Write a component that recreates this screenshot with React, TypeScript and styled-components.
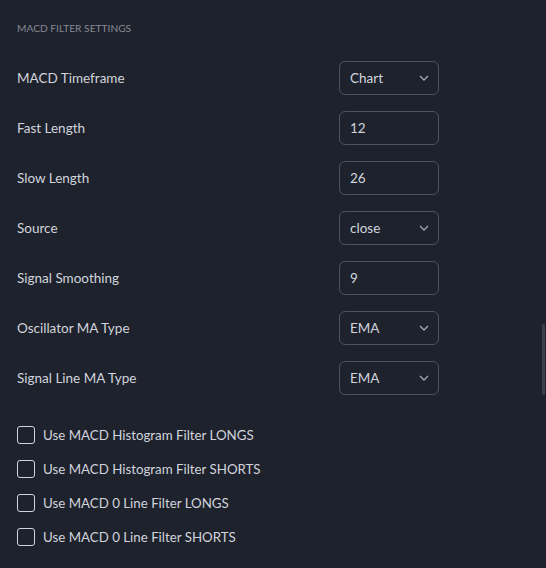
import React from 'react'
import styled, { createGlobalStyle } from 'styled-components'

const GlobalStyle = createGlobalStyle`
  html, body {
    margin: 0;
    padding: 0;
    background: #1e222d;
  }
  body {
    font-family: Lato, "Liberation Sans", sans-serif;
    color: #d1d4dc;
  }
`

const Page = styled.div`
  position: relative;
  width: 546px;
  height: 568px;
  box-sizing: border-box;
  padding: 20px 107px 0 17px;
  background: #1e222d;
  overflow: hidden;
`

const SectionTitle = styled.div`
  font-size: 10.2px;
  line-height: 16px;
  text-transform: uppercase;
  color: #868993;
  margin-bottom: 25px;
`

const FieldList = styled.div`
  display: flex;
  flex-direction: column;
  gap: 16px;
`

const Row = styled.div`
  display: flex;
  align-items: center;
  justify-content: space-between;
  height: 34px;
`

const Label = styled.span`
  font-size: 13.5px;
  color: #d1d4dc;
`

const Control = styled.div`
  box-sizing: border-box;
  width: 100px;
  height: 34px;
  border: 1px solid #50535e;
  border-radius: 6px;
  display: flex;
  align-items: center;
  justify-content: space-between;
  padding: 0 9px 0 10px;
  font-size: 13.5px;
  color: #d1d4dc;
`

const Chevron = styled.svg`
  width: 10px;
  height: 6px;
  flex: none;
`

const CheckList = styled.div`
  display: flex;
  flex-direction: column;
  gap: 16px;
  margin-top: 31px;
`

const CheckRow = styled.label`
  display: flex;
  align-items: center;
  gap: 8px;
  height: 18px;
  font-size: 13.3px;
  color: #d1d4dc;
  white-space: nowrap;
`

const Box = styled.span`
  box-sizing: border-box;
  width: 18px;
  height: 18px;
  border: 1px solid #d1d4dc;
  border-radius: 3px;
  flex: none;
`

const ScrollThumb = styled.div`
  position: absolute;
  right: 1px;
  top: 324px;
  width: 3px;
  height: 71px;
  background: #3b3f4a;
  border-radius: 2px;
`

type Field = { label: string; value: string; select?: boolean }

const fields: Field[] = [
  { label: 'MACD Timeframe', value: 'Chart', select: true },
  { label: 'Fast Length', value: '12' },
  { label: 'Slow Length', value: '26' },
  { label: 'Source', value: 'close', select: true },
  { label: 'Signal Smoothing', value: '9' },
  { label: 'Oscillator MA Type', value: 'EMA', select: true },
  { label: 'Signal Line MA Type', value: 'EMA', select: true },
]

const checks = [
  'Use MACD Histogram Filter LONGS',
  'Use MACD Histogram Filter SHORTS',
  'Use MACD 0 Line Filter LONGS',
  'Use MACD 0 Line Filter SHORTS',
]

export default function App() {
  return (
    <>
      <GlobalStyle />
      <Page>
        <SectionTitle>MACD Filter Settings</SectionTitle>
        <FieldList>
          {fields.map((f) => (
            <Row key={f.label}>
              <Label>{f.label}</Label>
              <Control>
                <span>{f.value}</span>
                {f.select && (
                  <Chevron viewBox="0 0 10 6">
                    <path d="M1 1l4 4 4-4" fill="none" stroke="#a3a6af" strokeWidth="1.3" />
                  </Chevron>
                )}
              </Control>
            </Row>
          ))}
        </FieldList>
        <CheckList>
          {checks.map((c) => (
            <CheckRow key={c}>
              <Box />
              {c}
            </CheckRow>
          ))}
        </CheckList>
        <ScrollThumb />
      </Page>
    </>
  )
}
